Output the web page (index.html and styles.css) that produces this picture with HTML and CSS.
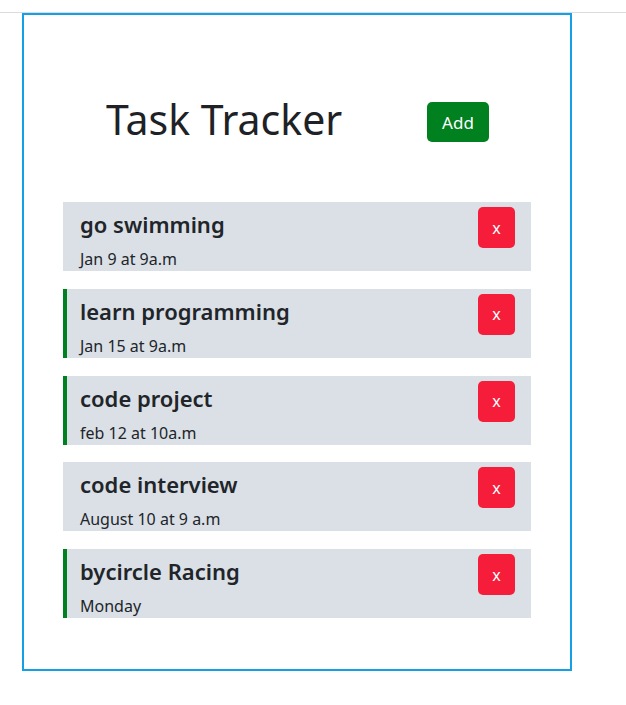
FILE: index.html
```html
<!DOCTYPE html>
<html>
<head>
<meta charset="utf-8">
<link rel="stylesheet" href="styles.css">
</head>
<body>
<div class="topbar"></div>
<div class="container">
  <header class="header">
    <h1 class="title">Task Tracker</h1>
    <button class="btn btn-add">Add</button>
  </header>
  <div class="tasks">
    <div class="task">
      <div class="task-text">
        <h3 class="task-title">go swimming</h3>
        <p class="task-day">Jan 9 at 9a.m</p>
      </div>
      <button class="btn btn-del">x</button>
    </div>
    <div class="task reminder">
      <div class="task-text">
        <h3 class="task-title">learn programming</h3>
        <p class="task-day">Jan 15 at 9a.m</p>
      </div>
      <button class="btn btn-del">x</button>
    </div>
    <div class="task reminder">
      <div class="task-text">
        <h3 class="task-title">code project</h3>
        <p class="task-day">feb 12 at 10a.m</p>
      </div>
      <button class="btn btn-del">x</button>
    </div>
    <div class="task">
      <div class="task-text">
        <h3 class="task-title">code interview</h3>
        <p class="task-day">August 10 at 9 a.m</p>
      </div>
      <button class="btn btn-del">x</button>
    </div>
    <div class="task reminder">
      <div class="task-text">
        <h3 class="task-title">bycircle Racing</h3>
        <p class="task-day">Monday</p>
      </div>
      <button class="btn btn-del">x</button>
    </div>
  </div>
</div>
</body>
</html>
```
FILE: styles.css
```css
* { box-sizing: border-box; }
body {
  margin: 0;
  font-family: "Noto Sans", "Open Sans", sans-serif;
  color: #212529;
  background: #fff;
}
.topbar {
  height: 13px;
  border-bottom: 1px solid #dcdcdc;
}
.container {
  margin-left: 22px;
  width: 550px;
  height: 658px;
  border: 2px solid #14a0e4;
  padding: 0 39px;
}
.header {
  display: flex;
  justify-content: space-between;
  align-items: center;
  height: 40px;
  margin-top: 87px;
  padding: 0 42px 0 43px;
}
.title {
  margin: 0 0 6px;
  font-size: 41px;
  font-weight: 400;
  line-height: 1;
  color: #1e2226;
}
.btn {
  border: none;
  color: #fff;
  font-family: inherit;
  border-radius: 5px;
  cursor: pointer;
}
.btn-add {
  width: 62px;
  height: 40px;
  background: #00801f;
  font-size: 17px;
}
.tasks {
  margin-top: 60px;
  display: flex;
  flex-direction: column;
  gap: 17.75px;
}
.task {
  height: 69px;
  background: #dae0e6;
  border-left: 4px solid transparent;
  display: flex;
  justify-content: space-between;
  align-items: flex-start;
  padding: 5px 16px 0 13px;
}
.task.reminder { border-left-color: #00801f; }
.task-title {
  margin: 2px 0 0;
  font-size: 22px;
  font-weight: 600;
  line-height: 30px;
}
.task-day {
  margin: 9px 0 0;
  font-size: 16px;
  line-height: 22px;
}
.btn-del {
  width: 37px;
  height: 41px;
  background: #f51d3a;
  font-size: 16px;
}
```
